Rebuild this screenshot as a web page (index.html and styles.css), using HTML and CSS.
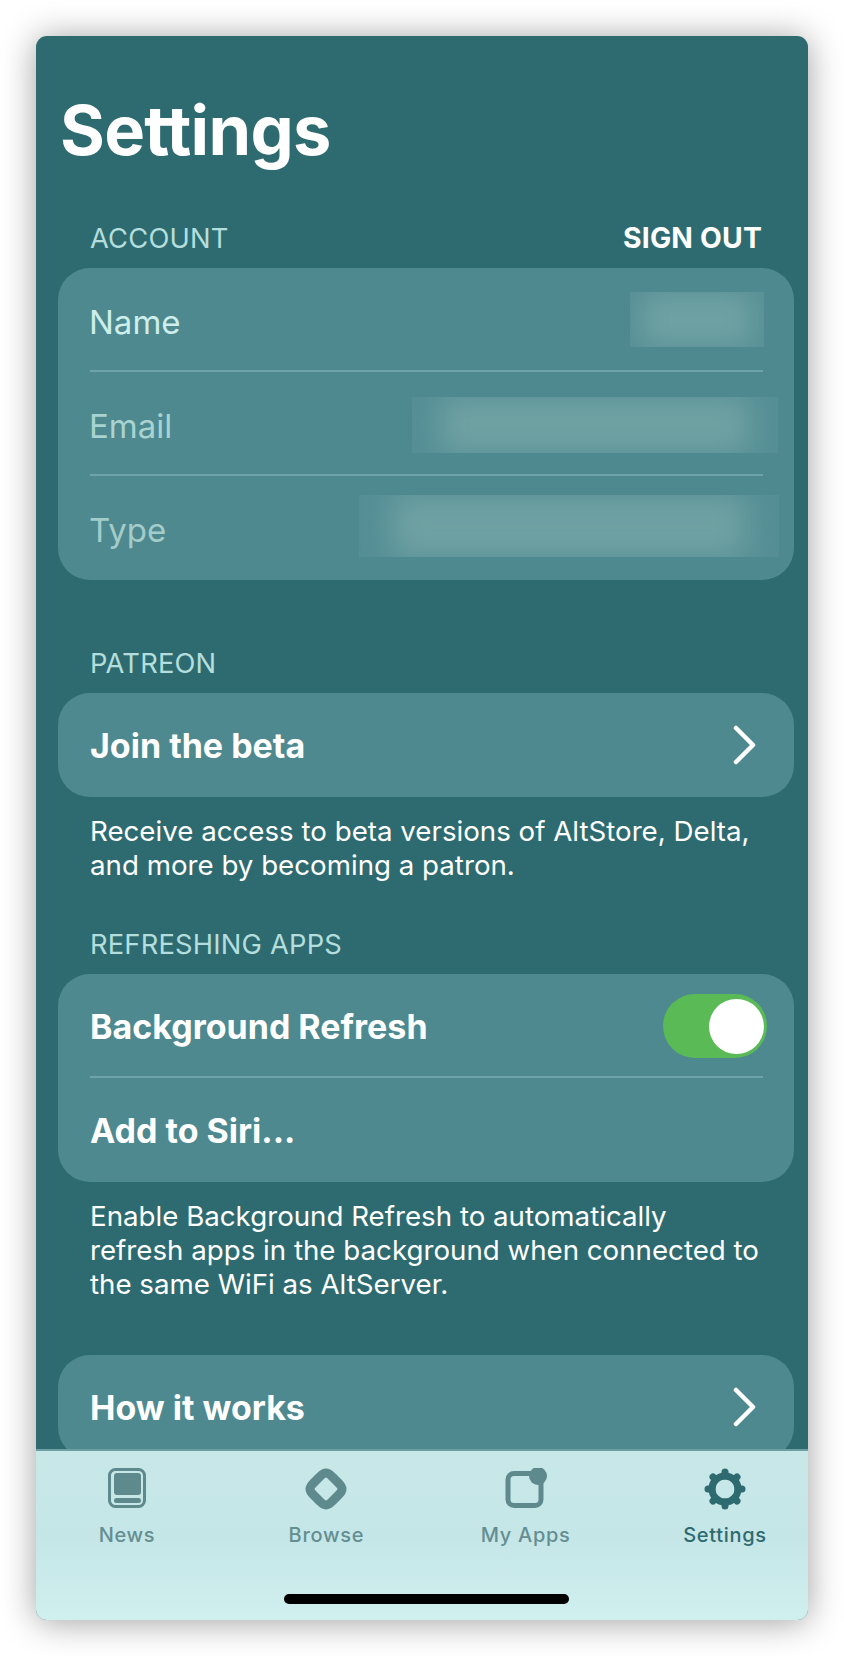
FILE: index.html
```html
<!DOCTYPE html>
<html lang="en">
<head>
<meta charset="utf-8">
<title>Settings</title>
<link rel="stylesheet" href="styles.css">
</head>
<body>
<div class="screen">
  <main class="content">
    <h1 class="title">Settings</h1>

    <div class="section-head head-account"><span>ACCOUNT</span><span class="sign-out">SIGN OUT</span></div>
    <section class="card">
      <div class="row row-info"><span class="info-label">Name</span><div class="redact redact-name"><i></i></div></div>
      <div class="row row-info"><span class="info-label dim">Email</span><div class="redact redact-email"><i></i></div></div>
      <div class="row row-info"><span class="info-label dimmer">Type</span><div class="redact redact-type"><i></i></div></div>
    </section>

    <div class="section-head head-patreon"><span>PATREON</span></div>
    <section class="card">
      <div class="row"><span class="row-title">Join the beta</span>
        <svg class="chevron" viewBox="0 0 24 40"><path d="M3 3 L20 20 L3 37"/></svg></div>
    </section>
    <p class="note">Receive access to beta versions of AltStore, Delta, and more by becoming a patron.</p>

    <div class="section-head head-refresh"><span>REFRESHING APPS</span></div>
    <section class="card">
      <div class="row"><span class="row-title">Background Refresh</span><div class="toggle"><div class="knob"></div></div></div>
      <div class="row"><span class="row-title">Add to Siri...</span></div>
    </section>
    <p class="note">Enable Background Refresh to automatically refresh apps in the background when connected to the same WiFi as AltServer.</p>

    <section class="card card-how">
      <div class="row"><span class="row-title">How it works</span>
        <svg class="chevron" viewBox="0 0 24 40"><path d="M3 3 L20 20 L3 37"/></svg></div>
    </section>
  </main>

  <nav class="tabbar">
    <div class="tab">
      <svg class="tab-icon" viewBox="0 0 42 42"><rect class="ln" x="3.500" y="1.500" width="35" height="37" rx="6"/><rect class="fl" x="8" y="5" width="27" height="22" rx="3"/><rect class="fl" x="8" y="30" width="27" height="5" rx="2.500"/></svg>
      <span>News</span>
    </div>
    <div class="tab">
      <svg class="tab-icon" viewBox="0 0 42 42"><path class="ln thick" d="M21 5 C24 5 25.500 7 28 9.500 L32.500 14 C35 16.500 37 18 37 21 C37 24 35 25.500 32.500 28 L28 32.500 C25.500 35 24 37 21 37 C18 37 16.500 35 14 32.500 L9.500 28 C7 25.500 5 24 5 21 C5 18 7 16.500 9.500 14 L14 9.500 C16.500 7 18 5 21 5 Z"/></svg>
      <span>Browse</span>
    </div>
    <div class="tab">
      <svg class="tab-icon" viewBox="0 0 42 42"><rect class="ln apps" x="3" y="5.500" width="33" height="32" rx="6"/><circle class="fl" cx="33" cy="8" r="9"/></svg>
      <span>My Apps</span>
    </div>
    <div class="tab active">
      <svg class="tab-icon" viewBox="0 0 42 42">
        <circle class="ln gear" cx="21" cy="21" r="13"/>
        <g class="teeth">
          <path d="M21 4V8"/><path d="M21 34V38"/><path d="M4 21H8"/><path d="M34 21H38"/>
          <path d="M9 9L11.800 11.800"/><path d="M33 9L30.200 11.800"/><path d="M9 33L11.800 30.200"/><path d="M33 33L30.200 30.200"/>
        </g>
      </svg>
      <span>Settings</span>
    </div>
    <div class="home-indicator"></div>
  </nav>
</div>
</body>
</html>
```
FILE: styles.css
```css
* { box-sizing: border-box; }
html, body { margin: 0; height: 100%; background: #fff; }
body {
  padding: 36px;
  font-family: Inter, "Liberation Sans", sans-serif;
}
.screen {
  height: 1584px;
  display: flex;
  flex-direction: column;
  overflow: clip;
  border-radius: 11px;
  background: #2e6b70;
  box-shadow: 0 2px 34px rgba(0, 0, 0, .38);
}
.content {
  flex: 1;
  min-height: 0;
  overflow: hidden;
  padding: 0 14px 0 22px;
}
.title {
  margin: 55px 0 0 2px;
  height: 80px;
  font-size: 68.500px;
  line-height: 80px;
  font-weight: 700;
  letter-spacing: -.7px;
  color: #fff;
}
.section-head {
  display: flex;
  justify-content: space-between;
  padding: 0 32px;
  height: 34px;
  align-items: center;
  font-size: 27.300px;
  letter-spacing: .2px;
  color: #b4dedd;
}
.head-account { margin-top: 50px; margin-bottom: 13px; }
.head-patreon { margin-top: 66px; margin-bottom: 13px; }
.head-refresh { margin-top: 45px; margin-bottom: 13px; }
.sign-out { font-weight: 700; font-size: 28.300px; color: #fff; }
.card {
  border-radius: 32px;
  background: #4e898f;
  overflow: hidden;
}
.row {
  position: relative;
  display: flex;
  align-items: center;
  justify-content: space-between;
  height: 104px;
  padding: 0 30px 0 32px;
}
.row-info { padding-top: 4px; }
.row + .row::before {
  content: "";
  position: absolute;
  left: 32px;
  right: 31px;
  top: -2px;
  height: 2px;
  background: #6ea3aa;
}
.info-label { font-size: 33px; color: #cdeeea; margin-left: -1px; }
.info-label.dim { color: #a9d3d1; }
.info-label.dimmer { color: #a4cccb; }
.row-title { font-size: 34px; font-weight: 700; color: #fff; }
.redact {
  overflow: hidden;
  background: #558f95;
}
.redact i {
  display: block;
  height: 100%;
  margin: 0 8%;
  background: #6fa1a3;
  filter: blur(14px);
}
.redact-name { width: 134px; height: 55px; margin-top: -6px; margin-right: 0; }
.redact-email { width: 366px; height: 56px; margin-top: -2px; margin-right: -14px; }
.redact-type { width: 420px; height: 62px; margin-top: -8px; margin-right: -15px; }
.chevron {
  width: 24px;
  height: 40px;
  margin-right: 7px;
  fill: none;
  stroke: #fff;
  stroke-width: 4.500;
  stroke-linecap: round;
  stroke-linejoin: round;
}
.note {
  margin: 17px 30px 0 32px;
  font-size: 27.700px;
  line-height: 34px;
  color: #fff;
}
.card-how { margin-top: 54px; }
.toggle {
  width: 104px;
  height: 64px;
  margin-right: -3px;
  padding: 5px 3px 5px 5px;
  display: flex;
  justify-content: flex-end;
  border-radius: 32px;
  background: #5aba55;
}
.knob {
  width: 55px;
  height: 55px;
  border-radius: 50%;
  background: #fff;
}
.tabbar {
  position: relative;
  flex: none;
  height: 171px;
  display: flex;
  justify-content: space-between;
  padding: 17px 23px 0 31px;
  border-top: 2px solid #6c9ea2;
  background: linear-gradient(180deg, #c8e8e8 0%, #c5e6e7 50%, #d0f0ef 100%);
}
.tab {
  width: 120px;
  display: flex;
  flex-direction: column;
  align-items: center;
  gap: 12px;
  font-size: 20px;
  font-weight: 500;
  letter-spacing: .7px;
  line-height: 26px;
  color: #648e91;
}
.tab.active { color: #2e6b70; }
.tab-icon { width: 42px; height: 42px; display: block; }
.ln { fill: none; stroke: #5f8a8d; stroke-width: 3; }
.fl { fill: #5f8a8d; }
.thick { stroke-width: 9; }
.apps { stroke-width: 5; }
.gear { stroke: #2e6b70; stroke-width: 7; }
.teeth path { fill: none; stroke: #2e6b70; stroke-width: 7; stroke-linecap: round; }
.home-indicator {
  position: absolute;
  left: 248px;
  bottom: 16px;
  width: 285px;
  height: 10px;
  border-radius: 5px;
  background: #000;
}
```
